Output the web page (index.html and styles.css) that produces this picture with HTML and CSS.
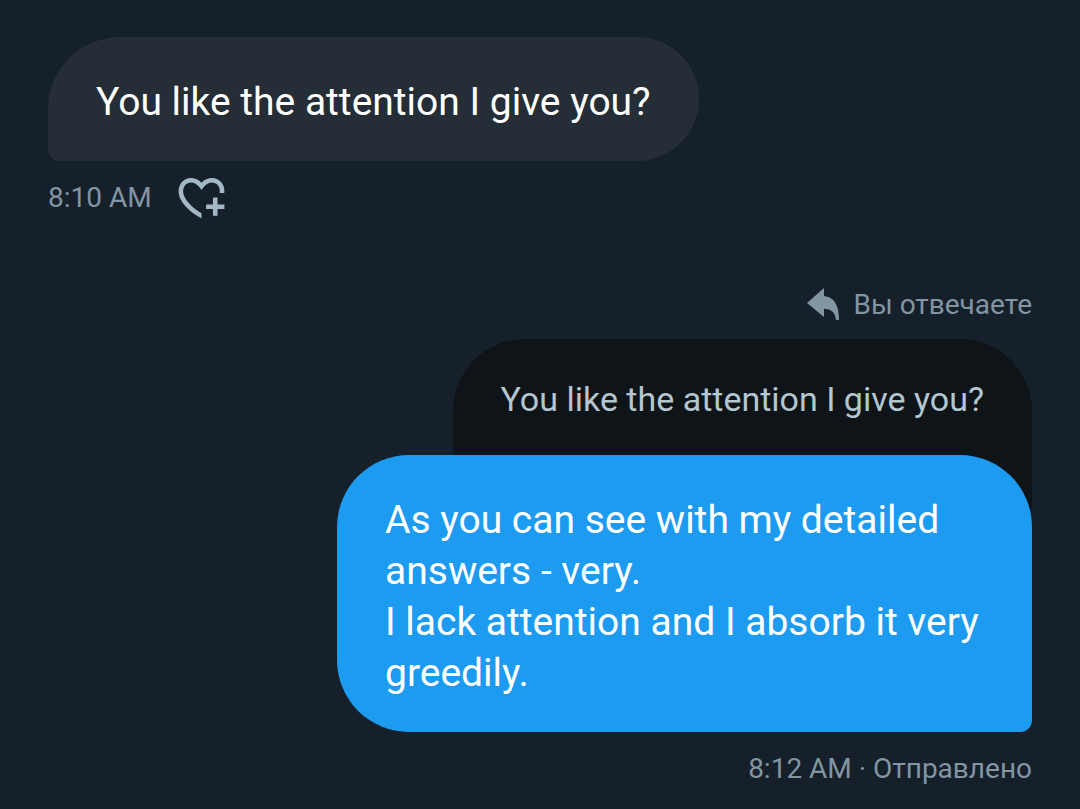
FILE: index.html
```
<!DOCTYPE html>
<html lang="ru">
<head>
  <meta charset="UTF-8">
  <meta name="viewport" content="width=device-width, initial-scale=1.0">
  <title>Messages</title>
  <link rel="stylesheet" href="styles.css">
</head>
<body>
  <main class="chat">

    <article class="message received">
      <p class="bubble" lang="en">You like the attention I give you?</p>
      <div class="meta">
        <time>8:10 AM</time>
        <button class="react" type="button" aria-label="Like">
          <svg viewBox="0 0 24 24" aria-hidden="true">
            <path d="M17 12v3h-2.998v2h3v3h2v-3h3v-2h-3.001v-3H17zm-5 6.839c-3.871-2.34-6.053-4.639-7.127-6.609-1.112-2.04-1.031-3.7-.479-4.82.561-1.13 1.667-1.84 2.91-1.91 1.222-.06 2.68.51 3.892 2.16l.806 1.09.805-1.09c1.211-1.65 2.668-2.22 3.89-2.16 1.242.07 2.347.78 2.908 1.91.334.677.49 1.554.321 2.59h2.011c.153-1.283-.039-2.469-.539-3.48-.887-1.79-2.647-2.91-4.601-3.01-1.65-.09-3.367.56-4.796 2.01-1.43-1.45-3.147-2.1-4.798-2.01-1.954.1-3.714 1.22-4.601 3.01-.896 1.81-.846 4.17.514 6.67 1.353 2.48 4.003 5.12 8.382 7.67l.502.299v-2.32z"/>
          </svg>
        </button>
      </div>
    </article>

    <article class="message sent">
      <div class="reply-label">
        <svg viewBox="0 0 32 32" aria-hidden="true">
          <path d="M17 0 0 15l17 14v-8c6 0 11 2 12 11h3C32 17 27 9 17 8z"/>
        </svg>
        <span>Вы отвечаете</span>
      </div>
      <blockquote class="quote" lang="en">You like the attention I give you?</blockquote>
      <p class="bubble" lang="en">As you can see with my detailed answers - very.<br>I lack attention and I absorb it very greedily.</p>
      <div class="meta"><span><time>8:12 AM</time> · Отправлено</span></div>
    </article>

  </main>
</body>
</html>
```

FILE: styles.css
```
:root {
  --bg: #16202a;
  --grey: #252e36;
  --black: #0f1418;
  --blue: #1d9bf0;
  --muted: #8295a2;
}

* { box-sizing: border-box; }

body {
  margin: 0;
  background-color: var(--bg);
  color: white;
  font-family: Roboto, sans-serif;
}

.chat {
  display: flex;
  flex-direction: column;
  gap: 46px;
  padding: 37px 48px 5px;
}

.message {
  display: flex;
  flex-direction: column;
  align-items: flex-start;
}

.sent { align-items: flex-end; }

.bubble {
  max-width: 695px;
  margin: 0;
  padding: 40px 48px 33px;
  border-radius: 72px 62px 62px 12px;
  background-color: var(--grey);
  font-size: 39px;
  line-height: 51px;
}

/* overlaps the bottom of the quoted message */
.sent .bubble {
  margin-top: -62px;
  border-radius: 72px 72px 12px 72px;
  background-color: var(--blue);
}

.quote {
  margin: 0;
  padding: 38px 48px 95px;
  border-radius: 72px 72px 12px 72px;
  background-color: var(--black);
  color: #b4c6d0;
  font-size: 34px;
  line-height: 45px;
}

.meta {
  display: flex;
  align-items: center;
  gap: 22px;
  min-height: 72px;
  color: var(--muted);
  font-size: 28px;
}

.react {
  padding: 0;
  border: none;
  background: transparent;
  cursor: pointer;
}

.react svg {
  display: block;
  width: 55px;
  height: 55px;
  fill: #a3b8c6;
}

.reply-label {
  display: flex;
  align-items: center;
  gap: 15px;
  height: 50px;
  color: var(--muted);
  font-size: 28px;
  margin-bottom: 10px;
}

.reply-label svg {
  width: 32px;
  height: 32px;
  fill: var(--muted);
}
```
